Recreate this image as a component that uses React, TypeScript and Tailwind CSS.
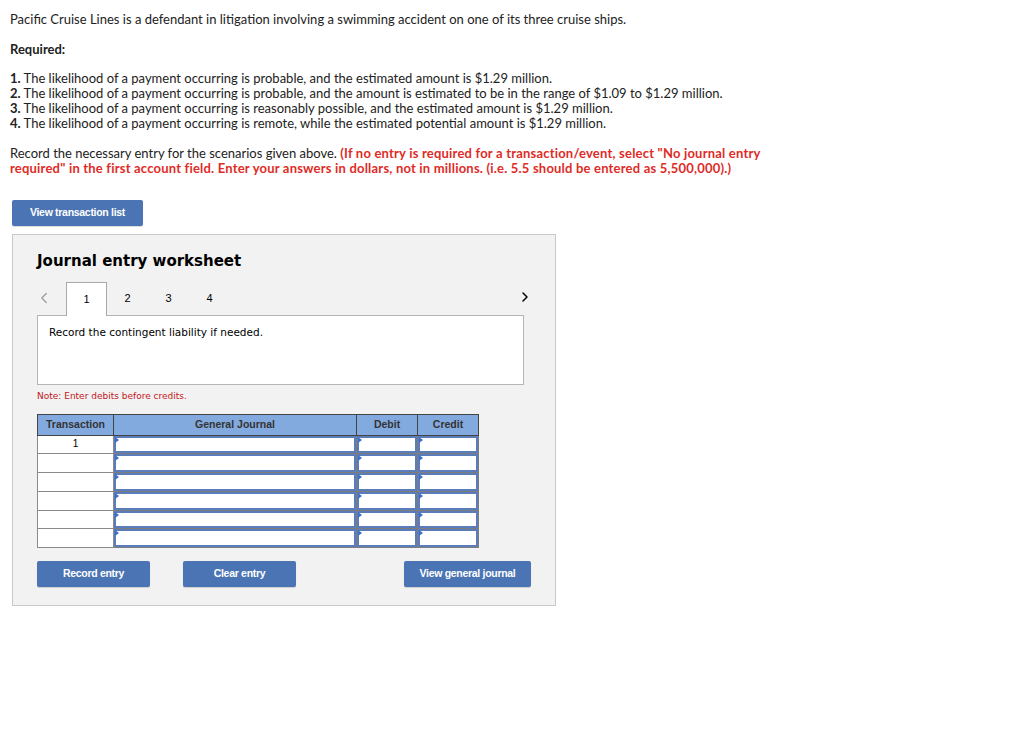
import { ChevronLeft, ChevronRight } from 'lucide-react';

const rows = ['1', '', '', '', '', ''];

function InputCell({ w }: { w: string }) {
  return (
    <td className={`${w} p-0 border border-[#7d7d7d] bg-white`}>
      <div className="relative h-[17.8px] border-2 border-[#5a7cba] bg-white">
        <span className="absolute -left-[1px] -top-[1px] w-0 h-0 border-y-[3px] border-y-transparent border-l-[4px] border-l-[#3a6fd0]" />
      </div>
    </td>
  );
}

function BlueButton({ label, className }: { label: string; className: string }) {
  return (
    <button
      className={`${className} h-[26px] bg-[#4a74b3] rounded-[2px] text-white text-[10.5px] tracking-[-0.3px] font-bold shadow-[0_1px_1px_rgba(0,0,0,0.15)]`}
      style={{ fontFamily: '"Liberation Sans", Arial, sans-serif' }}
    >
      {label}
    </button>
  );
}

export default function App() {
  return (
    <div className="w-[1024px] h-[735px] bg-white text-[#222] px-[10px] pt-[12px]" style={{ fontFamily: 'Lato, "Open Sans", sans-serif' }}>
      <p className="text-[13px] leading-[15px]">
        Pacific Cruise Lines is a defendant in litigation involving a swimming accident on one of its three cruise ships.
      </p>
      <p className="text-[13px] leading-[15px] font-bold mt-[15px]">Required:</p>
      <div className="text-[13px] leading-[15px] mt-[14px]">
        <p><b>1.</b> The likelihood of a payment occurring is probable, and the estimated amount is $1.29 million.</p>
        <p><b>2.</b> The likelihood of a payment occurring is probable, and the amount is estimated to be in the range of $1.09 to $1.29 million.</p>
        <p><b>3.</b> The likelihood of a payment occurring is reasonably possible, and the estimated amount is $1.29 million.</p>
        <p><b>4.</b> The likelihood of a payment occurring is remote, while the estimated potential amount is $1.29 million.</p>
      </div>
      <p className="text-[13px] leading-[14.5px] mt-[15px] w-[770px]">
        Record the necessary entry for the scenarios given above.{' '}
        <span className="font-bold text-[#e02b27] tracking-[0.2px]">
          (If no entry is required for a transaction/event, select "No journal entry required" in the first account field. Enter your answers in dollars, not in millions. (i.e. 5.5 should be entered as 5,500,000).)
        </span>
      </p>

      <BlueButton label="View transaction list" className="ml-[2px] mt-[25px] w-[131px]" />

      <div className="ml-[2px] mt-[8px] w-[544px] h-[372px] bg-[#f2f2f2] border border-[#c9c9c9] pl-[24px] pr-[31px] pt-[16px]">
        <h2 className="text-[15px] font-bold text-black leading-[20px]" style={{ fontFamily: '"DejaVu Sans", Verdana, sans-serif' }}>
          Journal entry worksheet
        </h2>

        <div className="flex items-end h-[33px] mt-[11px]" style={{ fontFamily: '"Liberation Sans", Arial, sans-serif' }}>
          <div className="w-[31px] h-full flex items-center -ml-[2px]">
            <ChevronLeft size={18} strokeWidth={1.6} className="text-[#9a9a9a] -mt-[2px]" />
          </div>
          <div className="w-[41px] h-[34px] -mb-[1px] bg-white border border-b-0 border-[#a9a9a9] flex items-center justify-center text-[11px] text-black relative z-10">
            1
          </div>
          <div className="w-[41px] h-full flex items-center justify-center text-[11px] text-black">2</div>
          <div className="w-[41px] h-full flex items-center justify-center text-[11px] text-black">3</div>
          <div className="w-[41px] h-full flex items-center justify-center text-[11px] text-black">4</div>
          <div className="flex-1" />
          <div className="h-full flex items-center -mr-[9px]">
            <ChevronRight size={16} strokeWidth={2.2} className="text-black -mt-[3px]" />
          </div>
        </div>

        <div className="h-[70px] bg-white border border-[#b5b5b5] px-[11px] pt-[9px] text-[10.5px] text-black" style={{ fontFamily: '"DejaVu Sans", Verdana, sans-serif' }}>
          Record the contingent liability if needed.
        </div>

        <p className="mt-[5px] text-[9px] text-[#c4161c]" style={{ fontFamily: '"DejaVu Sans", Verdana, sans-serif' }}>
          Note: Enter debits before credits.
        </p>

        <table className="mt-[10px] border-collapse border border-[#707070]" style={{ fontFamily: '"Liberation Sans", Arial, sans-serif' }}>
          <thead>
            <tr className="h-[21px] bg-[#83aadf] text-[10.5px] font-bold text-[#333]">
              <th className="w-[76px] border border-[#444] font-bold">Transaction</th>
              <th className="w-[243px] border border-[#444] font-bold">General Journal</th>
              <th className="w-[61px] border border-[#444] font-bold">Debit</th>
              <th className="w-[61px] border border-[#444] font-bold">Credit</th>
            </tr>
          </thead>
          <tbody>
            {rows.map((r, i) => (
              <tr key={i} className="h-[18.8px]">
                <td className="w-[76px] p-0 border border-[#8a8a8a] bg-white text-center text-[10px] text-black leading-[16px]">{r}</td>
                <InputCell w="w-[243px]" />
                <InputCell w="w-[61px]" />
                <InputCell w="w-[61px]" />
              </tr>
            ))}
          </tbody>
        </table>

        <div className="flex mt-[13px]">
          <BlueButton label="Record entry" className="w-[113px]" />
          <BlueButton label="Clear entry" className="w-[113px] ml-[33px]" />
          <div className="flex-1" />
          <BlueButton label="View general journal" className="w-[127px] mr-[-7px]" />
        </div>
      </div>
    </div>
  );
}
